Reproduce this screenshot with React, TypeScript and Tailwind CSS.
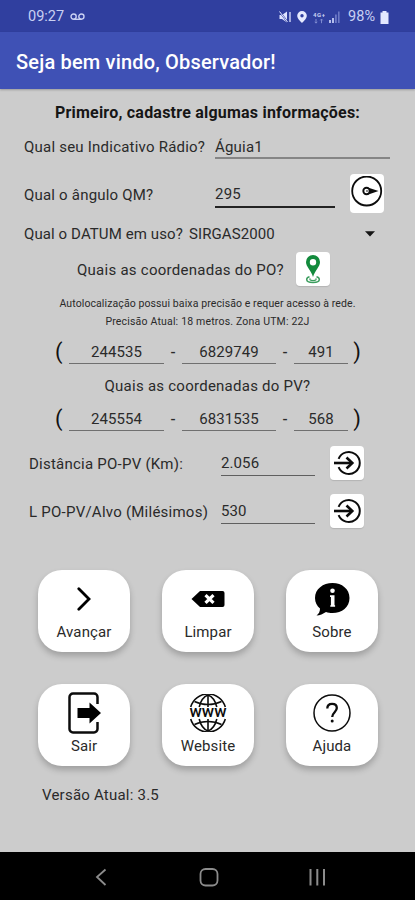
import type { ReactNode } from 'react';

interface Tile {
  label: string;
  icon: ReactNode;
}

const TOP_TILES: Tile[] = [
  { label: 'Avançar', icon: <ForwardIcon /> },
  { label: 'Limpar', icon: <ClearIcon /> },
  { label: 'Sobre', icon: <AboutIcon /> },
];

const BOTTOM_TILES: Tile[] = [
  { label: 'Sair', icon: <ExitIcon /> },
  { label: 'Website', icon: <GlobeIcon /> },
  { label: 'Ajuda', icon: <HelpIcon /> },
];

export default function App() {
  return (
    <div className="flex h-[900px] w-[415px] flex-col overflow-hidden bg-[#cccccc] font-['Roboto',sans-serif] text-[15px] text-[#2a2a2a]">
      <StatusBar />
      <header className="z-10 flex h-[57px] shrink-0 items-center bg-[#3f51b5] pl-4 pt-[2px] shadow-[0_1px_2px_rgba(0,0,0,0.25)]">
        <h1 className="whitespace-nowrap text-[20px] font-medium tracking-[0.18px] text-white">Seja bem vindo, Observador!</h1>
      </header>

      <main className="flex flex-col whitespace-nowrap">
        <h2 className="flex h-12 items-center justify-center text-[16px] font-bold tracking-[0.22px] text-[#161616]">
          Primeiro, cadastre algumas informações:
        </h2>

        {/* Observer data */}
        <div className="flex h-[22px] pl-6">
          <span className="w-[191px] leading-[20px] tracking-[0.22px]">Qual seu Indicativo Rádio?</span>
          <span className="w-[175px] border-b-2 border-[#858585] leading-[20px] tracking-[0.2px]">Águia1</span>
        </div>
        <div className="mt-[15px] flex h-[39px] items-center pl-6">
          <span className="w-[191px] pt-[3px] tracking-[0.2px]">Qual o ângulo QM?</span>
          <span className="mt-[3px] h-[26px] w-[120px] border-b-2 border-[#222] leading-[24px] tracking-[0.2px]">295</span>
          <button className="ml-[15px] flex h-[39px] w-[34px] justify-center rounded-[4px] bg-white pt-[2px]">
            <CompassIcon />
          </button>
        </div>
        <div className="flex h-[39px] items-center pl-6 pr-[40px] pt-[3px]">
          <span className="w-[165px] tracking-[0.1px]">Qual o DATUM em uso?</span>
          <span className="tracking-[0.1px]">SIRGAS2000</span>
          <svg className="ml-auto" width="10" height="6" viewBox="0 0 10 6">
            <path d="M0 0.3h10L5 5.6z" fill="#151515" />
          </svg>
        </div>

        {/* Coordinates */}
        <div className="flex h-[34px] items-center pl-[77px]">
          <span className="w-[219px] pt-0.5 tracking-[0.26px]">Quais as coordenadas do PO?</span>
          <button className="flex h-[34px] w-[34px] items-center justify-center rounded-[4px] bg-white shadow-[0_1px_1px_rgba(0,0,0,0.12)]">
            <PinIcon />
          </button>
        </div>
        <p className="mt-2 h-[19px] text-center text-[10.5px] leading-[19px] tracking-[0.1px]">
          Autolocalização possui baixa precisão e requer acesso à rede.
        </p>
        <p className="h-[18px] text-center text-[10.5px] leading-[18px] tracking-[0.18px]">
          Precisão Atual: 18 metros. Zona UTM: 22J
        </p>
        <Coordinates values={['244535', '6829749', '491']} />
        <p className="h-[26px] text-center leading-[26px] tracking-[0.25px]">Quais as coordenadas do PV?</p>
        <Coordinates values={['245554', '6831535', '568']} className="-mt-px" />

        {/* Computed results */}
        <ResultRow label="Distância PO-PV (Km):" value="2.056" className="mt-[6px]" />
        <ResultRow label="L PO-PV/Alvo (Milésimos)" value="530" className="mt-[14px]" />

        <TileRow tiles={TOP_TILES} className="mt-[42px]" />
        <TileRow tiles={BOTTOM_TILES} className="mt-[32px]" />

        <p className="mt-[19px] pl-[42px] leading-[20px] tracking-[0.22px]">Versão Atual: 3.5</p>
      </main>

      <NavBar />
    </div>
  );
}

function StatusBar() {
  return (
    <div className="flex h-8 shrink-0 items-center bg-[#303f9f] pl-7 pr-[26px] pt-[2px] text-[14.500px] text-[#c9d0f2]">
      <span>09:27</span>
      <svg className="ml-[6px]" width="15" height="8" viewBox="0 0 15 8" fill="none" stroke="#c9d0f2" strokeWidth="1.4">
        <circle cx="3.6" cy="3.6" r="2.6" />
        <circle cx="11.4" cy="3.6" r="2.6" />
        <path d="M3.6 6.3h7.8" />
      </svg>
      <div className="ml-auto flex items-center">
        <svg width="12" height="12" viewBox="0 0 12 12" fill="none" stroke="#dfe4ff">
          <path d="M0.5 4h2.5l5-3.500v11l-5-3.500h-2.500z" fill="#dfe4ff" stroke="none" />
          <path d="M0.500 0.500l8 10.500" stroke="#303f9f" strokeWidth="1.800" />
          <path d="M0.500 0.500l8 10.500" strokeWidth="1" />
          <path d="M11 1v10" strokeWidth="1.300" />
        </svg>
        <svg className="ml-[6px]" width="10" height="12" viewBox="0 0 10 12">
          <path fillRule="evenodd" fill="#e6eaff" d="M5 0a4.800 4.800 0 0 0-4.800 4.800C0.200 8 5 12 5 12s4.800-4 4.800-7.200A4.800 4.800 0 0 0 5 0zm0 3a1.700 1.700 0 1 1 0 3.400A1.700 1.700 0 0 1 5 3z" />
        </svg>
        <svg className="ml-[6px]" width="12" height="13" viewBox="0 0 12 13" fill="none">
          <text x="0" y="5.500" fontSize="6" fontWeight="700" fill="#c9d0f2" textLength="12" fontFamily="Roboto">4G+</text>
          <path d="M3 8v4M1.800 10.800L3 12.200l1.200-1.400M8.500 12.200V8M7.300 9.400l1.200-1.400 1.200 1.400" stroke="#7f8bd0" />
        </svg>
        <svg className="ml-[4px]" width="11" height="12" viewBox="0 0 11 12">
          <path d="M0 9h2v3H0zM3 7h2v5H3z" fill="#b4bdec" />
          <path d="M6 3.500h1.800V12H6zM9 0.500h1.600V12H9z" fill="#6c79c6" />
        </svg>
        <span className="ml-[8px]">98%</span>
        <svg className="ml-[5px]" width="9" height="13" viewBox="0 0 9 13">
          <path d="M2.500 0h4v1.500H8.500V13H0.500V1.500h2z" fill="#e3e8ff" />
        </svg>
      </div>
    </div>
  );
}

function Coordinates({ values, className = '' }: { values: [string, string, string]; className?: string }) {
  return (
    <div className={`${className} flex h-[42px] items-center pl-[55px]`}>
      <span className="w-[14px] text-[22px] leading-[22px] text-[#111]">(</span>
      <Value className="w-[95px]">{values[0]}</Value>
      <span className="w-[18px] text-center font-medium">-</span>
      <Value className="w-[94px]">{values[1]}</Value>
      <span className="w-[18px] text-center font-medium">-</span>
      <Value className="w-[54px]">{values[2]}</Value>
      <span className="w-[13px] text-right text-[22px] leading-[22px] text-[#111]">)</span>
    </div>
  );
}

function Value({ className, children }: { className: string; children: string }) {
  return (
    <span className={`${className} h-[24px] border-b-[1.5px] border-[#6f6f6f] text-center leading-[24px] tracking-[0.1px]`}>{children}</span>
  );
}

function ResultRow({ label, value, className }: { label: string; value: string; className: string }) {
  return (
    <div className={`${className} flex h-[34px] items-center pl-[29px]`}>
      <span className="w-[192px] pt-0.5 tracking-[0.24px]">{label}</span>
      <span className="mt-[2px] h-[24px] w-[94px] border-b border-[#5f5f5f] leading-[22px] tracking-[0.1px]">{value}</span>
      <button className="ml-[15px] flex h-[34px] w-[34px] items-center justify-center rounded-[4px] bg-white shadow-[0_1px_1px_rgba(0,0,0,0.12)]">
        <EnterIcon />
      </button>
    </div>
  );
}

function TileRow({ tiles, className }: { tiles: Tile[]; className: string }) {
  return (
    <div className={`${className} flex gap-[32px] pl-[38px]`}>
      {tiles.map(({ label, icon }) => (
        <button
          key={label}
          className="flex h-[82px] w-[92px] flex-col items-center rounded-[24px] bg-white shadow-[0_4px_6px_rgba(0,0,0,0.22)]"
        >
          <span className="flex h-[53px] items-center justify-center pt-[4px]">{icon}</span>
          <span className="leading-[18px] tracking-[0.1px]">{label}</span>
        </button>
      ))}
    </div>
  );
}

function NavBar() {
  return (
    <nav className="mt-auto h-12 shrink-0 bg-black">
      <svg width="415" height="48" viewBox="0 0 415 48" fill="none" stroke="#8c8c8c" strokeWidth="1.8">
        <path d="M105.500 17.500L97 25l8.500 8" />
        <rect x="200.500" y="17" width="17" height="16.500" rx="5" />
        <path d="M310.500 17v16.500M317.300 17v16.500M324 17v16.500" strokeWidth="2" />
      </svg>
    </nav>
  );
}

function CompassIcon() {
  return (
    <svg width="32" height="32" viewBox="0 0 32 32" fill="none" stroke="#0c0c0c">
      <circle cx="15.700" cy="15" r="14.500" strokeWidth="1.800" />
      <path d="M16 11.200L27.500 15L16 19z" fill="#0c0c0c" stroke="none" />
      <circle cx="15.500" cy="15" r="3.200" fill="#fff" strokeWidth="1.900" />
      <circle cx="16" cy="15" r="0.900" fill="#555" stroke="none" />
    </svg>
  );
}

function PinIcon() {
  return (
    <svg width="16" height="30" viewBox="0 0 16 30" fill="none">
      <path
        fillRule="evenodd"
        fill="#128a3c"
        d="M8 1a7 7 0 0 0-7 7c0 5 5 8 7 15 2-7 7-10 7-15a7 7 0 0 0-7-7zm0 4a3.200 3.200 0 1 1 0 6.400A3.200 3.200 0 0 1 8 5z"
      />
      <path d="M4.500 22.800C2.500 23.300 1.700 24.300 1.700 25.500c0 1.800 2.700 3 6.300 3s6.300-1.200 6.300-3c0-1.200-.8-2.200-2.800-2.700" stroke="#3c9d5e" strokeWidth="1.500" />
      <path d="M5.300 24.300c-1.200 1.600.2 2.300 2.700 2.300s3.900-.7 2.700-2.300" stroke="#3c9d5e" strokeWidth="1.100" />
    </svg>
  );
}

function EnterIcon() {
  return (
    <svg width="28" height="26" viewBox="0 0 28 26" fill="none" stroke="#0c0c0c" strokeWidth="2">
      <path d="M5.600 8.800A11 11 0 1 1 5.600 17.200" />
      <path d="M1 13h18" strokeWidth="2.600" />
      <path d="M13.500 7.500L19.300 13l-5.800 5.500" strokeWidth="2.600" />
    </svg>
  );
}

function ForwardIcon() {
  return (
    <svg width="14" height="24" viewBox="0 0 14 24" fill="none" stroke="#000" strokeWidth="2.800">
      <path d="M1.800 1.800L12 12L1.800 22.200" strokeLinecap="round" />
    </svg>
  );
}

function ClearIcon() {
  return (
    <svg width="34" height="18" viewBox="0 0 34 18">
      <path d="M0.500 9L9 1h22.500a2 2 0 0 1 2 2v12a2 2 0 0 1-2 2H9z" fill="#000" />
      <path d="M14.500 5.200l8 7.600M22.500 5.200l-8 7.600" stroke="#fff" strokeWidth="3.200" />
    </svg>
  );
}

function AboutIcon() {
  return (
    <svg width="36" height="34" viewBox="0 0 36 34">
      <path d="M18.500 1C28 1 35.500 7 35.500 16S28 31 18.500 31c-2.500 0-4.500-.3-6.500-1-3 2-6 3.300-9.500 3.500C5 31.500 6 29.500 6 26.500 3 24 1 20.500 1 16 1 7 9 1 18.500 1z" fill="#000" />
      <circle cx="18.500" cy="8.800" r="2.300" fill="#fff" />
      <path d="M16 13.200h4.500v10h.6v1.600h-4.800v-1.600h.6V15H16z" fill="#fff" />
    </svg>
  );
}

function ExitIcon() {
  return (
    <svg width="36" height="42" viewBox="0 0 36 42" fill="none">
      <path d="M31.500 12V5A3.500 3.500 0 0 0 28 1.500H7A3.500 3.500 0 0 0 3.500 5v32A3.500 3.500 0 0 0 7 40.500h21a3.500 3.500 0 0 0 3.500-3.500v-7" stroke="#0c0c0c" strokeWidth="2.500" />
      <path d="M11.500 16h12v-5.500L35 21L23.500 31.500V26h-12z" fill="#000" />
    </svg>
  );
}

function GlobeIcon() {
  return (
    <svg width="38" height="38" viewBox="0 0 38 38" fill="none" stroke="#0c0c0c" strokeWidth="1.600">
      <path d="M1.700 13A18 18 0 0 1 36.300 13M1.700 25A18 18 0 0 0 36.300 25" />
      <path d="M19 1v12M19 25v12" />
      <path d="M10.200 13C11.500 7.500 15 2.500 19 1c4 1.500 7.500 6.500 8.800 12M10.200 25c1.300 5.500 4.800 10.500 8.800 12 4-1.500 7.500-6.500 8.800-12" />
      <path d="M5.500 7.500c8 4 19 4 27 0M5.500 30.500c8-4 19-4 27 0" />
      <text x="0.500" y="23.200" textLength="37" lengthAdjust="spacingAndGlyphs" fontFamily="Roboto" fontSize="16" fontWeight="500" fill="#0c0c0c" stroke="none">www</text>
    </svg>
  );
}

function HelpIcon() {
  return (
    <svg width="38" height="38" viewBox="0 0 38 38" fill="none" stroke="#0c0c0c">
      <circle cx="19" cy="19" r="18" strokeWidth="1.500" />
      <path d="M14.300 14.500c0-3 2-4.700 4.800-4.700s4.700 1.700 4.700 4.300c0 4-4.600 4.400-4.600 9" strokeWidth="2.300" />
      <circle cx="19.200" cy="27" r="1.500" fill="#0c0c0c" stroke="none" />
    </svg>
  );
}
